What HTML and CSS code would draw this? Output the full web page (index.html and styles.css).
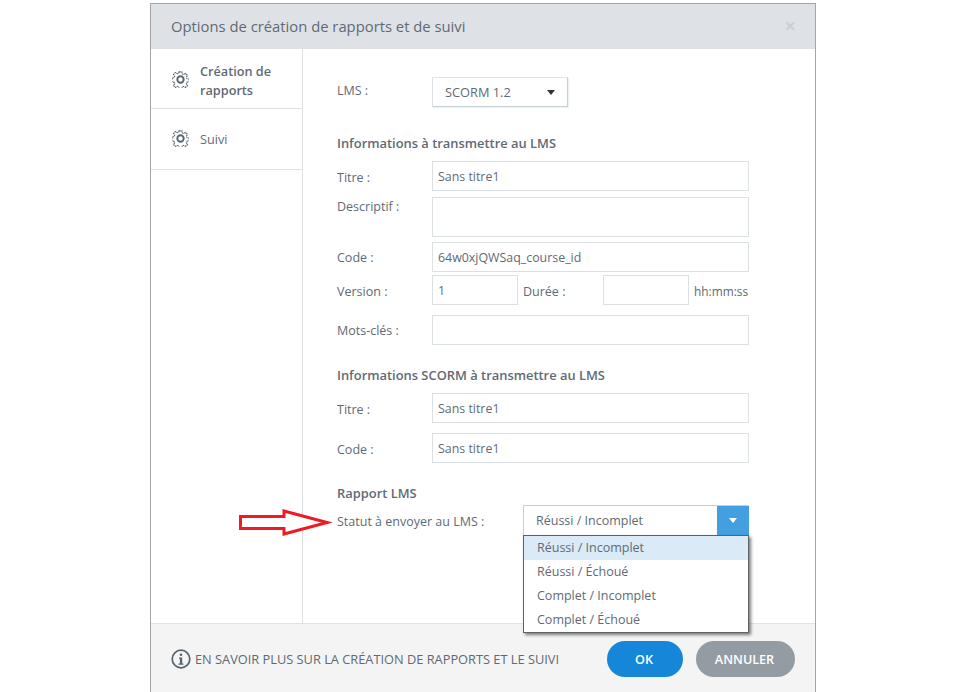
FILE: index.html
```html
<!DOCTYPE html>
<html lang="fr">
<head>
<meta charset="utf-8">
<title>Options</title>
<link rel="stylesheet" href="styles.css">
</head>
<body>
<div class="dialog">
  <header class="head">
    <h1 class="title">Options de création de rapports et de suivi</h1>
    <span class="close">×</span>
  </header>
  <div class="main">
    <nav class="side">
      <div class="tab tab-active">
        <svg class="gear" viewBox="0 0 16 16"><path d="M6.700 .8h2.600l.4 2 1.300.6 1.800-1.100 1.800 1.800-1.100 1.800.6 1.300 2 .4v2.600l-2 .4-.6 1.300 1.100 1.800-1.800 1.800-1.800-1.100-1.300.6-.4 2H6.700l-.4-2-1.300-.6-1.800 1.100-1.800-1.800 1.100-1.800-.6-1.300-2-.4V6.700l2-.4.6-1.300-1.100-1.800 1.800-1.800 1.800 1.100 1.300-.6z"/><circle cx="8" cy="8" r="3"/></svg>
        <span class="tab-label">Création de rapports</span>
      </div>
      <div class="tab tab-plain">
        <svg class="gear" viewBox="0 0 16 16"><path d="M6.700 .8h2.600l.4 2 1.300.6 1.800-1.100 1.800 1.800-1.100 1.800.6 1.300 2 .4v2.600l-2 .4-.6 1.300 1.100 1.800-1.800 1.800-1.800-1.100-1.300.6-.4 2H6.700l-.4-2-1.300-.6-1.800 1.100-1.800-1.800 1.100-1.800-.6-1.300-2-.4V6.700l2-.4.6-1.300-1.100-1.800 1.800-1.800 1.800 1.100 1.300-.6z"/><circle cx="8" cy="8" r="3"/></svg>
        <span class="tab-label">Suivi</span>
      </div>
    </nav>
    <section class="content">
      <div class="row row-lms">
        <label class="lab">LMS :</label>
        <div class="select-lms"><span>SCORM 1.2</span><i class="caret"></i></div>
      </div>
      <h2 class="sec sec-first">Informations à transmettre au LMS</h2>
      <div class="row"><label class="lab lab-low">Titre :</label><div class="field">Sans titre1</div></div>
      <div class="row row-top gap6"><label class="lab lab-top">Descriptif :</label><div class="field field-tall"></div></div>
      <div class="row gap5"><label class="lab">Code :</label><div class="field">64w0xjQWSaq_course_id</div></div>
      <div class="row gap3">
        <label class="lab lab-low">Version :</label>
        <div class="field field-s">1</div>
        <span class="lab-d lab-low">Durée :</span>
        <div class="field field-s"></div>
        <span class="hint lab-low">hh:mm:ss</span>
      </div>
      <div class="row gap10"><label class="lab">Mots-clés :</label><div class="field"></div></div>
      <h2 class="sec sec-next">Informations SCORM à transmettre au LMS</h2>
      <div class="row"><label class="lab lab-low">Titre :</label><div class="field">Sans titre1</div></div>
      <div class="row gap10"><label class="lab lab-low">Code :</label><div class="field">Sans titre1</div></div>
      <h2 class="sec sec-report">Rapport LMS</h2>
      <div class="row row-status">
        <label class="lab lab-status">Statut à envoyer au LMS :</label>
        <div class="combo">
          <span class="combo-val">Réussi / Incomplet</span>
          <span class="combo-btn"><i class="caret caret-w"></i></span>
          <ul class="menu">
            <li class="sel">Réussi / Incomplet</li>
            <li>Réussi / Échoué</li>
            <li>Complet / Incomplet</li>
            <li>Complet / Échoué</li>
          </ul>
        </div>
      </div>
    </section>
  </div>
  <footer class="foot">
    <div class="learn">
      <svg class="info" viewBox="0 0 20 20"><circle cx="10" cy="10" r="8.800"/><circle class="dot" cx="10" cy="5.800" r="1.300"/><path class="dot" d="M8 8.500h3.200v6h1.300v1.300H7.600v-1.300h1.300v-4.700H8z"/></svg>
      <span>EN SAVOIR PLUS SUR LA CRÉATION DE RAPPORTS ET LE SUIVI</span>
    </div>
    <div class="btns">
      <button class="btn btn-ok">OK</button>
      <button class="btn btn-cancel">ANNULER</button>
    </div>
  </footer>
</div>
<svg class="arrow" viewBox="0 0 94 30"><path d="M2.500 8.500H46V3L89 14.500 46 26v-5.500H2.500z"/></svg>
</body>
</html>
```
FILE: styles.css
```css
* { box-sizing: border-box; }
html, body { margin: 0; height: 692px; overflow: hidden; background: #fff; }
body {
  font-family: "Open Sans", "Noto Sans", sans-serif;
  font-size: 12.500px;
  color: #5f6a75;
  position: relative;
}
.dialog {
  width: 666px;
  height: 689px;
  margin: 3px 0 0 150px;
  border: 1px solid #a3a5a6;
  border-bottom: 0;
  display: flex;
  flex-direction: column;
  background: #fff;
}
.head {
  height: 45px;
  flex: none;
  background: #dee2e6;
  display: flex;
  align-items: center;
  justify-content: space-between;
  padding: 0 19px 2px 20px;
}
.title { margin: 0; font-size: 14.800px; font-weight: 400; color: #5f6a75; }
.close { font-size: 20px; font-weight: 700; color: #ccd0d3; line-height: 1; }
.main { flex: 1; display: flex; min-height: 0; }
.side { width: 152px; flex: none; border-right: 1px solid #dee2e6; }
.tab { display: flex; align-items: flex-start; padding-left: 21px; }
.tab-active { height: 59px; padding-top: 13px; }
.tab-plain { height: 62px; width: 151px; border-top: 1px solid #dee2e6; border-bottom: 1px solid #dee2e6; padding-top: 21px; }
.gear { width: 17px; height: 17px; flex: none; margin-top: 9px; margin-right: 11px; }
.tab-plain .gear { margin-top: 0; }
.gear path { fill: none; stroke: #56646f; stroke-width: 1; stroke-dasharray: 1.600 .6; }
.gear circle { fill: none; stroke: #56646f; stroke-width: 1.800; }
.tab-label { font-size: 12.700px; line-height: 19px; width: 90px; }
.tab-active .tab-label { font-weight: 600; }
.content { flex: 1; padding: 28px 0 0 34px; position: relative; }
.row { display: flex; align-items: center; }
.row-top { align-items: flex-start; }
.gap6 { margin-top: 6px; }
.gap5 { margin-top: 5px; }
.gap3 { margin-top: 3px; }
.gap10 { margin-top: 10px; }
.lab { width: 95px; flex: none; }
.lab-low { padding-top: 2px; }
.lab-top { padding-top: 1px; }
.select-lms {
  width: 136px; height: 30px;
  border: 1px solid #dee2e6; border-bottom-color: #c4cfd6; border-right-color: #c4cfd6;
  display: flex; align-items: center; justify-content: space-between;
  padding: 0 12px 0 12px;
  box-shadow: 1px 1px 1px #eef1f3;
  font-size: 12.800px;
}
.row-lms .lab { padding-bottom: 4px; }
.caret { display: block; width: 0; height: 0; border-left: 4px solid transparent; border-right: 4px solid transparent; border-top: 5px solid #333; }
.caret-w { border-top-color: #fff; }
.sec { margin: 0; font-size: 12.900px; font-weight: 600; color: #5f6a75; line-height: 18px; }
.sec-first { margin-top: 27px; margin-bottom: 9px; }
.sec-next { margin-top: 21px; margin-bottom: 9px; }
.sec-report { margin-top: 21px; margin-bottom: 3px; }
.field {
  width: 317px; height: 30px; flex: none;
  border: 1px solid #dbe0e4;
  padding: 0 5px;
  display: flex; align-items: center;
  font-size: 12.400px;
  color: #5f6a75;
}
.field-tall { height: 40px; }
.field-s { width: 86px; }
.lab-d { width: 85px; padding-left: 5px; }
.hint { padding-left: 5px; font-size: 11.900px; }
.row-status { align-items: flex-start; }
.lab-status { width: 186px; padding-top: 8px; }
.combo { position: relative; width: 226px; height: 31px; display: flex; border: 1px solid #c4cfd6; border-right: 0; }
.combo-val { flex: 1; padding: 0 12px; display: flex; align-items: center; }
.combo-btn { width: 32px; background: #439fe0; display: flex; align-items: center; justify-content: center; }
.menu {
  position: absolute; left: -1px; top: 29px; width: 226px;
  margin: 0; padding: 0; list-style: none;
  background: #fff;
  border: 1px solid #5f6265;
  box-shadow: 2px 2px 3px rgba(0,0,0,.5);
}
.menu li { height: 24px; padding: 0 0 2px 13px; display: flex; align-items: center; }
.menu .sel { background: #daeaf7; }
.foot {
  height: 69px; flex: none;
  background: #f4f4f4;
  border-top: 1px solid #e1e3e5;
  display: flex; align-items: center; justify-content: space-between;
  padding: 2px 20px 0 20px;
}
.learn { display: flex; align-items: center; gap: 4px; font-size: 12.800px; }
.info { width: 20px; height: 20px; margin-top: -1px; }
.info circle { fill: none; stroke: #56646f; stroke-width: 1.700; }
.info .dot { fill: #56646f; stroke: none; }
.btns { display: flex; gap: 13px; }
.btn {
  height: 36px; border: 0; border-radius: 18px;
  color: #fff; font-family: inherit; font-size: 12.600px; font-weight: 600;
  padding: 0 2px 0 0;
}
.btn-ok { width: 76px; background: #1586d8; }
.btn-cancel { width: 99px; background: #939ca3; }
.arrow { position: absolute; left: 238px; top: 508px; width: 94px; height: 30px; }
.arrow path { fill: #fff; stroke: #ed1c24; stroke-width: 3; }
```
